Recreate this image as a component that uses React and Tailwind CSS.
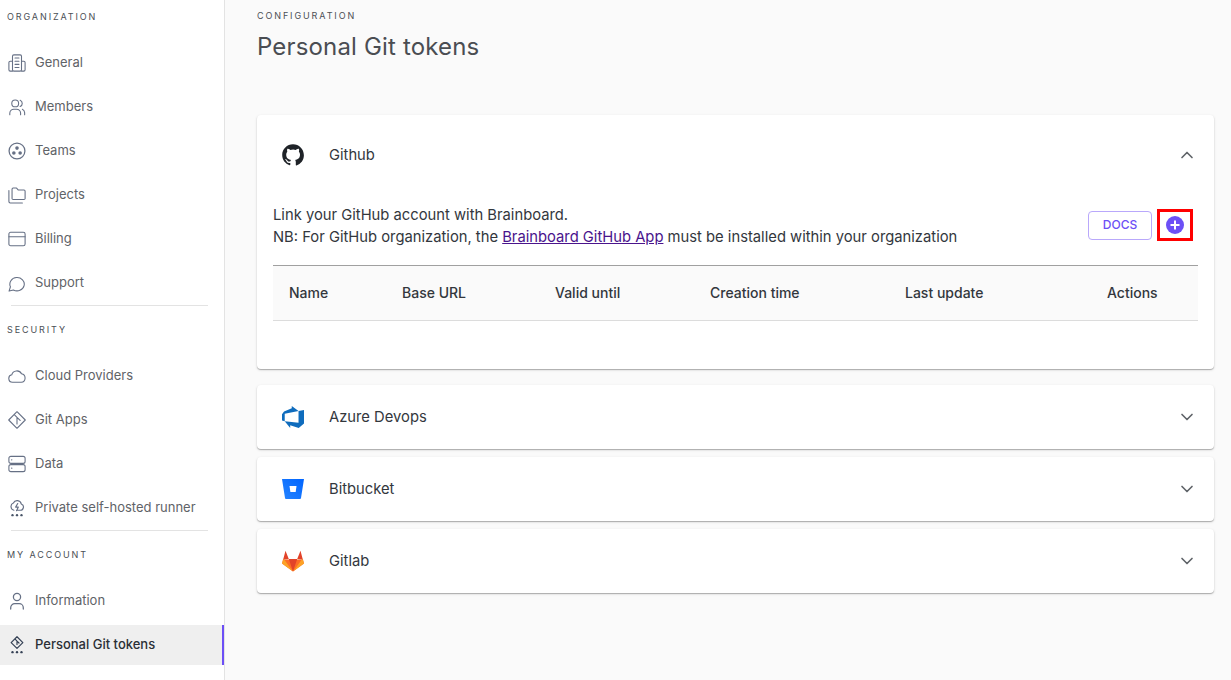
import React from "react";
import { ChevronUp, ChevronDown } from "lucide-react";

const S = (p) => <svg width="18" height="18" viewBox="0 0 20 20" fill="none" stroke="#667085" strokeWidth="1.200" strokeLinecap="round" strokeLinejoin="round" className="shrink-0" {...p} />;

const icons = {
  General: <S><rect x="5" y="1" width="10" height="18" rx="1.500" /><path d="M5 8H2.500A1.500 1.500 0 0 0 1 9.500v8A1.500 1.500 0 0 0 2.500 19H5M15 8h2.500A1.500 1.500 0 0 1 19 9.500v8a1.500 1.500 0 0 1-1.500 1.500H15M7.800 4.500h4.400M7.800 8h4.400M7.800 11.500h4.400M7.800 15h4.400" /></S>,
  Members: <S><circle cx="8" cy="6" r="3.800" /><path d="M2 18.500v-1.500a4.500 4.500 0 0 1 4.500-4.500h3A4.500 4.500 0 0 1 14 17v1.500M13.500 2.500a3.800 3.800 0 0 1 0 7M16 12.500a4.500 4.500 0 0 1 2.500 4v2" /></S>,
  Teams: <S strokeWidth="1.400"><circle cx="10" cy="10" r="8.800" /><circle cx="10" cy="6.800" r="2" fill="#667085" stroke="none" /><circle cx="6.500" cy="12.300" r="2" fill="#667085" stroke="none" /><circle cx="13.500" cy="12.300" r="2" fill="#667085" stroke="none" /></S>,
  Projects: <S><path d="M4.500 3.500A1.200 1.200 0 0 1 5.700 2.300h3.800l2 2.200h6.300A1.200 1.200 0 0 1 19 5.700v8.100a1.200 1.200 0 0 1-1.200 1.200H5.700a1.200 1.200 0 0 1-1.200-1.200zM1 5v12.300A1.500 1.500 0 0 0 2.500 18.800H16" /></S>,
  Billing: <S><rect x="1" y="2.500" width="18" height="15" rx="2" /><path d="M1 7.500h18" /></S>,
  Support: <S><path d="M1.200 19l1.500-4.800A8 7.400 0 1 1 6 17.700z" /></S>,
  "Cloud Providers": <S><path d="M5 17a4.200 4.200 0 0 1-.800-8.300A5.800 5.800 0 0 1 15 7.500a4.800 4.800 0 0 1-.300 9.500z" /></S>,
  "Git Apps": <S><path d="M10 .8l9.200 9.200-9.200 9.200L.8 10zM7.500 4.500l2.500 2.500M10 7v7.500M10 7l3.500 3.500" /></S>,
  Data: <S><rect x="1" y="1.500" width="18" height="7.800" rx="2.200" /><rect x="1" y="10.700" width="18" height="7.800" rx="2.200" /><path d="M4 5.400h.300M4 14.600h.300" /></S>,
  "Private self-hosted runner": <S strokeWidth="1.300"><path d="M6.500 12.500a4.200 4.200 0 0 1-.500-8 4.600 4.600 0 0 1 8.700 1 3.600 3.600 0 0 1-1.500 7H9.500M10.800 5L8.500 9h3L9.500 13" /><circle cx="5" cy="18" r="1.300" fill="#475467" stroke="none" /><circle cx="10" cy="18" r="1.300" fill="#475467" stroke="none" /><circle cx="15" cy="18" r="1.300" fill="#475467" stroke="none" /></S>,
  Information: <S strokeWidth="1.400"><circle cx="10" cy="5.500" r="4" /><path d="M3 19v-1.500a4.500 4.500 0 0 1 4.500-4.500h5a4.500 4.500 0 0 1 4.500 4.500V19" /></S>,
  "Personal Git tokens": <S stroke="#344054" strokeWidth="1.300"><path d="M10 .8l6.500 6.500-6.500 6.500-6.500-6.500zM8.200 3.800L10 5.600M10 5.600v3.800M10 5.600l2.200 2.200" /><circle cx="5" cy="18" r="1.300" fill="#344054" stroke="none" /><circle cx="10" cy="18" r="1.300" fill="#344054" stroke="none" /><circle cx="15" cy="18" r="1.300" fill="#344054" stroke="none" /></S>,
};

const Item = ({ label, active }) => (
  <div className={`flex h-10 shrink-0 items-center gap-[9px] pl-2 text-[13px] ${active ? "border-r-2 border-[#6c4ff6] bg-[#efefef] font-medium text-[#2b2f36]" : "text-[#5f6368]"}`}>
    {icons[label]}
    <span>{label}</span>
  </div>
);

const Heading = ({ children, className = "" }) => (
  <div className={`h-[20px] pl-[7px] text-[9px] leading-[20px] tracking-[0.21em] text-[#4b4f55] ${className}`}>{children}</div>
);

const Github = () => (
  <svg width="24" height="24" viewBox="0 0 24 24" fill="#1f2328"><path d="M12 1.300C6 1.300 1.200 6.100 1.200 12.100c0 4.800 3.100 8.800 7.400 10.200.5.100.7-.2.7-.5v-1.900c-3 .7-3.600-1.300-3.600-1.300-.5-1.200-1.200-1.600-1.200-1.600-1-.7.1-.7.1-.7 1.100.1 1.700 1.100 1.700 1.100 1 1.700 2.500 1.200 3.100.9.100-.7.400-1.200.7-1.400-2.400-.3-4.900-1.200-4.900-5.300 0-1.200.4-2.100 1.100-2.900-.1-.3-.5-1.400.1-2.900 0 0 .9-.3 3 1.100a10.300 10.300 0 0 1 5.400 0c2.100-1.400 3-1.100 3-1.100.6 1.500.2 2.600.1 2.900.7.800 1.100 1.700 1.100 2.900 0 4.100-2.500 5-4.900 5.300.4.300.7 1 .7 2v3c0 .3.2.6.7.500 4.300-1.400 7.400-5.400 7.400-10.200C22.800 6.100 18 1.300 12 1.300z" /></svg>
);

const Azure = () => (
  <svg width="22" height="22" viewBox="0 0 24 24"><path fill="#0f6cbd" d="M0 8.877L2.247 5.910l8.405-3.416V.022l7.370 5.393L2.966 8.338v8.225L0 15.707zm24-4.450v14.651l-5.753 4.900-9.303-3.057v3.056l-5.978-7.416 15.057 1.798V5.415z" /></svg>
);

const Bitbucket = () => (
  <svg width="24" height="24" viewBox="0 0 24 24"><defs><linearGradient id="bb" x1="1" y1="0" x2="0" y2="1"><stop offset="0" stopColor="#0065ff" /><stop offset="1" stopColor="#2684ff" /></linearGradient></defs><path fill="url(#bb)" d="M1 2h22l-3 19a1 1 0 0 1-1 .9H5a1 1 0 0 1-1-.9z" /><path fill="#fff" d="M8.500 9h7l-.8 6H9.400z" /></svg>
);

const Gitlab = () => (
  <svg width="24" height="24" viewBox="0 0 24 24"><path fill="#fc6d26" d="M12 22.500l-11-8 1-4h20l1 4z" /><path fill="#fca326" d="M1 14.500L2.500 9.500 7.500 16.500 12 22.500zM23 14.500L21.500 9.500 16.500 16.500 12 22.500z" /><path fill="#e24329" d="M12 22.500L7.800 10h8.400zM2.200 10.500L4.500 1.800 7.800 10zM21.800 10.500L19.500 1.800 16.200 10z" /></svg>
);

const Row = ({ icon, label, open, className = "" }) => (
  <div className={`flex h-16 items-center pl-6 pr-[17px] ${className}`}>
    <span className="flex w-6 justify-center">{icon}</span>
    <span className="ml-6 flex-1 text-[14.750px] text-[#33373d]">{label}</span>
    {open ? <ChevronUp size={20} strokeWidth={2} color="#5f6368" /> : <ChevronDown size={20} strokeWidth={2} color="#5f6368" />}
  </div>
);

const cardCls = "rounded-[4px] bg-white shadow-[0_1px_1px_rgba(0,0,0,0.25),0_1px_3px_rgba(0,0,0,0.12)]";

export default function App() {
  return (
    <div className="flex h-[680px] w-[1231px] overflow-hidden bg-[#fafafa] font-['Inter',sans-serif]">
      <aside className="h-full w-[225px] shrink-0 overflow-hidden border-r border-[#e3e3e3] bg-white">
        <div className="w-[224px] pt-[7px]">
          <Heading className="mb-[16px]">ORGANIZATION</Heading>
          <Item label="General" />
          <div className="mt-1" /><Item label="Members" />
          <div className="mt-1" /><Item label="Teams" />
          <div className="mt-1" /><Item label="Projects" />
          <div className="mt-1" /><Item label="Billing" />
          <div className="mt-1" /><Item label="Support" />
          <div className="ml-[11px] mr-4 mt-[2px] h-px bg-[#e3e3e3]" />
          <Heading className="mb-[16px] mt-[14px]">SECURITY</Heading>
          <Item label="Cloud Providers" />
          <div className="mt-1" /><Item label="Git Apps" />
          <div className="mt-1" /><Item label="Data" />
          <div className="mt-1" /><Item label="Private self-hosted runner" />
          <div className="ml-[11px] mr-4 mt-[2px] h-px bg-[#e3e3e3]" />
          <Heading className="mb-[16px] mt-[14px]">MY ACCOUNT</Heading>
          <Item label="Information" />
          <div className="mt-1" /><Item label="Personal Git tokens" active />
        </div>
      </aside>
      <main className="min-w-0 flex-1 pl-8 pr-[17px] pt-[6px]">
        <div className="h-5 text-[9px] leading-5 tracking-[0.21em] text-[#4b4f55]">CONFIGURATION</div>
        <h1 className="mt-[6px] text-[24px] font-normal leading-[30px] tracking-[0.16px] text-[#4a4d52]">Personal Git tokens</h1>
        <section className={`mt-[53px] ${cardCls}`}>
          <Row icon={<Github />} label="Github" open className="h-[80px]" />
          <div className="px-4 pb-12 pt-[9px]">
            <div className="flex items-start justify-between">
              <p className="text-[14.770px] leading-[22px] text-[#33373d]">
                Link your GitHub account with Brainboard.<br />
                NB: For GitHub organization, the <a href="#" className="text-[#4a148c] underline">Brainboard GitHub App</a> must be installed within your organization
              </p>
              <div className="mr-[5px] mt-[5px] flex items-center gap-[5px]">
                <button className="h-[29px] w-[64px] rounded-[4px] border border-[#b9a8fb] text-[12px] font-medium text-[#6c4ff6]">DOCS</button>
                <div className="flex h-[32px] w-[36px] items-center justify-center border-[3px] border-[#ff0000]">
                  <svg width="18" height="18" viewBox="0 0 18 18"><circle cx="9" cy="9" r="9" fill="#6c4ff6" /><path d="M9 4.500v9M4.500 9h9" stroke="#fff" strokeWidth="2" /></svg>
                </div>
              </div>
            </div>
            <div className="mt-[17px] grid h-[56px] grid-cols-[113px_153px_155px_195px_202px_1fr] items-center border-y border-t-[#a0a0a0] border-b-[#dcdcdc] bg-[#fafafa] pb-[2px] pl-4 text-[14px] font-medium text-[#33373d]">
              <span>Name</span><span>Base URL</span><span>Valid until</span><span>Creation time</span><span>Last update</span><span>Actions</span>
            </div>
          </div>
        </section>
        <section className={`mt-4 ${cardCls}`}><Row icon={<Azure />} label="Azure Devops" /></section>
        <section className={`mt-2 ${cardCls}`}><Row icon={<Bitbucket />} label="Bitbucket" /></section>
        <section className={`mt-2 ${cardCls}`}><Row icon={<Gitlab />} label="Gitlab" /></section>
      </main>
    </div>
  );
}
